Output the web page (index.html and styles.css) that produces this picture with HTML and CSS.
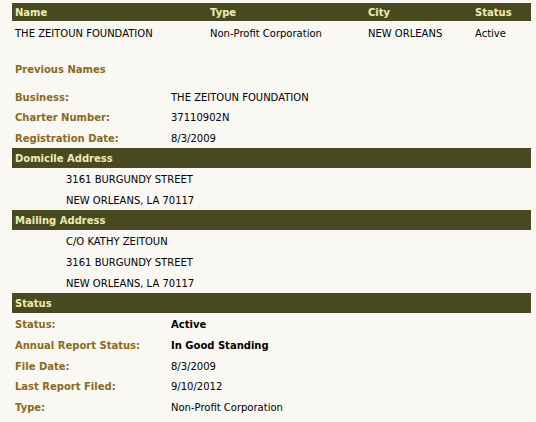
FILE: index.html
```html
<!DOCTYPE html>
<html lang="en">
<head>
    <meta charset="UTF-8">
    <title>Corporation Details</title>
    <link rel="stylesheet" href="styles.css">
</head>
<body>
<div id="page">
    <div class="grid head">
        <div>Name</div><div>Type</div><div>City</div><div>Status</div>
    </div>
    <div class="grid data">
        <div>THE ZEITOUN FOUNDATION</div><div>Non-Profit Corporation</div><div>NEW ORLEANS</div><div>Active</div>
    </div>
    <div class="prev">Previous Names</div>
    <div class="info">
        <div class="row"><span class="lbl">Business:</span><span>THE ZEITOUN FOUNDATION</span></div>
        <div class="row"><span class="lbl">Charter Number:</span><span>37110902N</span></div>
        <div class="row"><span class="lbl">Registration Date:</span><span>8/3/2009</span></div>
        <div class="bar">Domicile Address</div>
        <div class="addr">3161 BURGUNDY STREET</div>
        <div class="addr">NEW ORLEANS, LA 70117</div>
        <div class="bar">Mailing Address</div>
        <div class="addr">C/O KATHY ZEITOUN</div>
        <div class="addr">3161 BURGUNDY STREET</div>
        <div class="addr">NEW ORLEANS, LA 70117</div>
        <div class="bar">Status</div>
        <div class="row"><span class="lbl">Status:</span><span class="strong">Active</span></div>
        <div class="row"><span class="lbl">Annual Report Status:</span><span class="strong">In Good Standing</span></div>
        <div class="row"><span class="lbl">File Date:</span><span>8/3/2009</span></div>
        <div class="row"><span class="lbl">Last Report Filed:</span><span>9/10/2012</span></div>
        <div class="row"><span class="lbl">Type:</span><span>Non-Profit Corporation</span></div>
    </div>
</div>
</body>
</html>
```
FILE: styles.css
```css
body{
    margin: 0;
    background: #f9f8f3;
    font-family: "DejaVu Sans", Verdana, sans-serif;
    font-size: 10px;
    color: #000;
}
#page{
    width: 519px;
    padding: 3px 0 0 12px;
}
.grid{
    display: grid;
    grid-template-columns: 195px 158px 107px 59px;
}
.grid div{
    padding-left: 3px;
    white-space: nowrap;
}
.head{
    background: #4a4a22;
    color: #efebb4;
    font-weight: bold;
    height: 18px;
    line-height: 19px;
}
.data{
    height: 24px;
    line-height: 26px;
}
.prev{
    margin-top: 15px;
    padding-left: 3px;
    height: 20px;
    line-height: 20px;
    color: #8a6a1e;
    font-weight: bold;
}
.info{
    margin-top: 5.6px;
}
.row, .addr, .bar{
    box-sizing: border-box;
    height: 20.9px;
    padding-top: 3px;
    line-height: 17.9px;
    white-space: nowrap;
}
.row{
    display: flex;
    padding-left: 3px;
}
.lbl{
    width: 156px;
    color: #8a6a1e;
    font-weight: bold;
}
.strong{
    font-weight: bold;
}
.addr{
    padding-left: 54px;
}
.bar{
    background: #4a4a22;
    color: #efebb4;
    font-weight: bold;
    padding-left: 3px;
    height: 20px;
    padding-top: 2px;
    line-height: 18px;
}
```
